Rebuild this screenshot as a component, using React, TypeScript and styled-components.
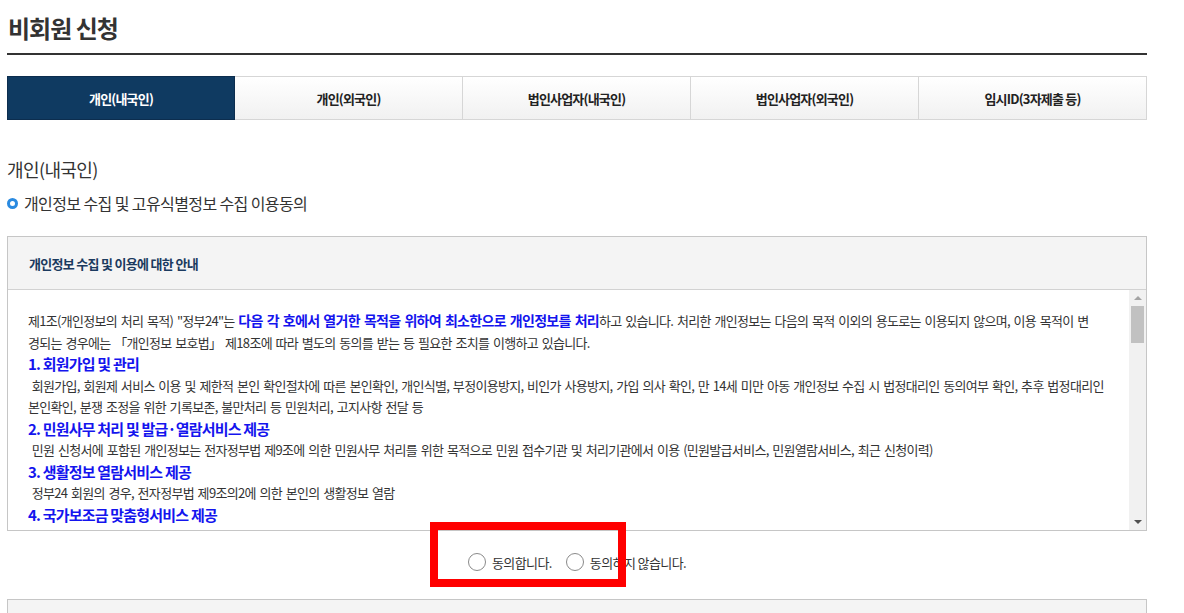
import React from 'react';
import styled, { createGlobalStyle } from 'styled-components';

const FONT = '"Noto Sans CJK KR", "Noto Sans", sans-serif';

const GlobalStyle = createGlobalStyle`
  html, body {
    margin: 0;
    padding: 0;
    background: #fff;
    font-family: ${FONT};
    color: #333;
  }
`;

const TABS = ['개인(내국인)', '개인(외국인)', '법인사업자(내국인)', '법인사업자(외국인)', '임시ID(3자제출 등)'];

const Page = styled.div`
  position: relative;
  width: 1140px;
  padding: 0 37px 40px 7px;
`;

const Title = styled.h2`
  margin: 0;
  padding: 13px 0 10px 1px;
  font-size: 24px;
  line-height: 30px;
  font-weight: 700;
  letter-spacing: -1px;
  color: #333;
  border-bottom: 2px solid #333;
`;

const Tabs = styled.ul`
  display: grid;
  grid-template-columns: repeat(5, 1fr);
  margin: 21px 0 0;
  padding: 0;
  list-style: none;
`;

const Tab = styled.li<{ $active?: boolean }>`
  height: 42px;
  display: flex;
  align-items: center;
  justify-content: center;
  font-size: 13px;
  font-weight: 700;
  letter-spacing: -0.8px;
  border: 1px solid ${p => (p.$active ? '#0c2d4e' : '#d6d6d6')};
  border-left-width: ${p => (p.$active ? '1px' : '0')};
  color: ${p => (p.$active ? '#fff' : '#222')};
  background: ${p => (p.$active ? '#0f3a61' : 'linear-gradient(#ffffff, #f1f1f1)')};
`;

const Section = styled.h3`
  margin: 36px 0 0;
  font-size: 18px;
  line-height: 26px;
  font-weight: 400;
  letter-spacing: -0.6px;
  color: #333;
`;

const Bullet = styled.p`
  display: flex;
  align-items: center;
  gap: 6px;
  margin: 9px 0 0;
  font-size: 16px;
  line-height: 24px;
  letter-spacing: -0.6px;
  color: #333;

  &::before {
    content: '';
    width: 5px;
    height: 5px;
    border: 3px solid #2a8ae0;
    border-radius: 50%;
  }
`;

const Box = styled.div`
  margin-top: 21px;
  border: 1px solid #c6c6c6;
`;

const BoxHead = styled.div`
  height: 52px;
  display: flex;
  align-items: center;
  padding-left: 21px;
  background: #f4f4f4;
  border-bottom: 1px solid #d2d2d2;
  font-size: 13px;
  font-weight: 700;
  letter-spacing: -0.7px;
  color: #1b3a5f;
`;

const ScrollArea = styled.div`
  display: flex;
  height: 240px;
`;

const ScrollContent = styled.div`
  flex: 1;
  overflow: hidden;
  padding: 20px 17px 0 20px;
  font-size: 13px;
  line-height: 21.5px;
  letter-spacing: -0.7px;
  word-spacing: 1.5px;
  color: #333;
`;

const Line = styled.span`
  display: block;
  white-space: nowrap;
`;

const ScrollBar = styled.div`
  width: 17px;
  display: flex;
  flex-direction: column;
  background: #f1f1f1;
`;

const ArrowBtn = styled.div<{ $dir: 'up' | 'down' }>`
  height: 16px;
  display: flex;
  align-items: center;
  justify-content: center;

  &::after {
    content: '';
    border-left: 4px solid transparent;
    border-right: 4px solid transparent;
    ${p => (p.$dir === 'up' ? 'border-bottom: 4px solid #a3a3a3;' : 'border-top: 4px solid #505050;')}
  }
`;

const Track = styled.div`
  flex: 1;
  padding: 0 2px;
`;

const Thumb = styled.div`
  height: 37px;
  background: #c1c1c1;
`;

const Strong = styled.strong`
  font-size: 14px;
  font-weight: 700;
  color: #1414ee;
`;

const Item = styled.span`
  display: block;
  white-space: nowrap;
  font-size: 15px;
  font-weight: 700;
  letter-spacing: -0.8px;
  word-spacing: 0;
  color: #1414ee;
`;

const Agree = styled.div`
  display: flex;
  justify-content: center;
  gap: 14px;
  padding-top: 21px;
  height: 20px;
`;

const Radio = styled.label`
  display: flex;
  align-items: center;
  gap: 6px;
  height: 20px;
  font-size: 13px;
  letter-spacing: -0.6px;
  color: #333;

  input {
    appearance: none;
    margin: 0;
    width: 18px;
    height: 18px;
    border: 1px solid #8a8a8a;
    border-radius: 50%;
    background: #fff;
  }
`;

const NextBox = styled.div`
  margin-top: 27px;
  height: 30px;
  border: 1px solid #c6c6c6;
  border-bottom: 0;
  background: #f4f4f4;
`;

const Highlight = styled.div`
  position: absolute;
  left: 430px;
  top: 522px;
  width: 180px;
  height: 49px;
  border: 8px solid #ff0000;
  pointer-events: none;
`;

const ITEMS: [string, string[]][] = [
  ['1. 회원가입 및 관리', [
    '회원가입, 회원제 서비스 이용 및 제한적 본인 확인절차에 따른 본인확인, 개인식별, 부정이용방지, 비인가 사용방지, 가입 의사 확인, 만 14세 미만 아동 개인정보 수집 시 법정대리인 동의여부 확인, 추후 법정대리인',
    '본인확인, 분쟁 조정을 위한 기록보존, 불만처리 등 민원처리, 고지사항 전달 등',
  ]],
  ['2. 민원사무 처리 및 발급·열람서비스 제공', [
    '민원 신청서에 포함된 개인정보는 전자정부법 제9조에 의한 민원사무 처리를 위한 목적으로 민원 접수기관 및 처리기관에서 이용 (민원발급서비스, 민원열람서비스, 최근 신청이력)',
  ]],
  ['3. 생활정보 열람서비스 제공', ['정부24 회원의 경우, 전자정부법 제9조의2에 의한 본인의 생활정보 열람']],
  ['4. 국가보조금 맞춤형서비스 제공', ['정부24 회원의 경우, 개인 및 가구의 특성에 맞는 국가보조금 등 혜택 정보의 안내 및 제공']],
  ['5. 전자문서지갑 서비스 제공', ['전자문서지갑에 보관된 전자문서의 발급, 보관, 제출 및 이력 관리']],
  ['6. 정책 및 서비스 알림 제공', ['정부24 회원의 경우, 신청한 민원의 처리 결과 및 생활밀착형 정책 정보의 알림 제공']],
  ['7. 통계분석 및 서비스 개선', ['서비스 이용 기록 분석을 통한 통계 작성 및 서비스 품질 개선']],
];

export default function App() {
  return (
    <>
      <GlobalStyle />
      <Page>
        <Title>비회원 신청</Title>

        <Tabs>
          {TABS.map((t, i) => (
            <Tab key={t} $active={i === 0}>{t}</Tab>
          ))}
        </Tabs>

        <Section>개인(내국인)</Section>
        <Bullet>개인정보 수집 및 고유식별정보 수집 이용동의</Bullet>

        <Box>
          <BoxHead>개인정보 수집 및 이용에 대한 안내</BoxHead>
          <ScrollArea>
            <ScrollContent>
              <Line>
                제1조(개인정보의 처리 목적) "정부24"는 <Strong>다음 각 호에서 열거한 목적을 위하여 최소한으로 개인정보를 처리</Strong>하고 있습니다. 처리한 개인정보는 다음의 목적 이외의 용도로는 이용되지 않으며, 이용 목적이 변
              </Line>
              <Line>경되는 경우에는 「개인정보 보호법」 제18조에 따라 별도의 동의를 받는 등 필요한 조치를 이행하고 있습니다.</Line>
              {ITEMS.map(([head, lines]) => (
                <React.Fragment key={head}>
                  <Item>{head}</Item>
                  {lines.map((l, i) => (
                    <Line key={l}>{i === 0 ? '\u00a0' + l : l}</Line>
                  ))}
                </React.Fragment>
              ))}
            </ScrollContent>
            <ScrollBar>
              <ArrowBtn $dir="up" />
              <Track>
                <Thumb />
              </Track>
              <ArrowBtn $dir="down" />
            </ScrollBar>
          </ScrollArea>
        </Box>

        <Agree>
          <Radio><input type="radio" name="agree" />동의합니다.</Radio>
          <Radio><input type="radio" name="agree" />동의하지 않습니다.</Radio>
        </Agree>

        <NextBox />

        <Highlight />
      </Page>
    </>
  );
}
